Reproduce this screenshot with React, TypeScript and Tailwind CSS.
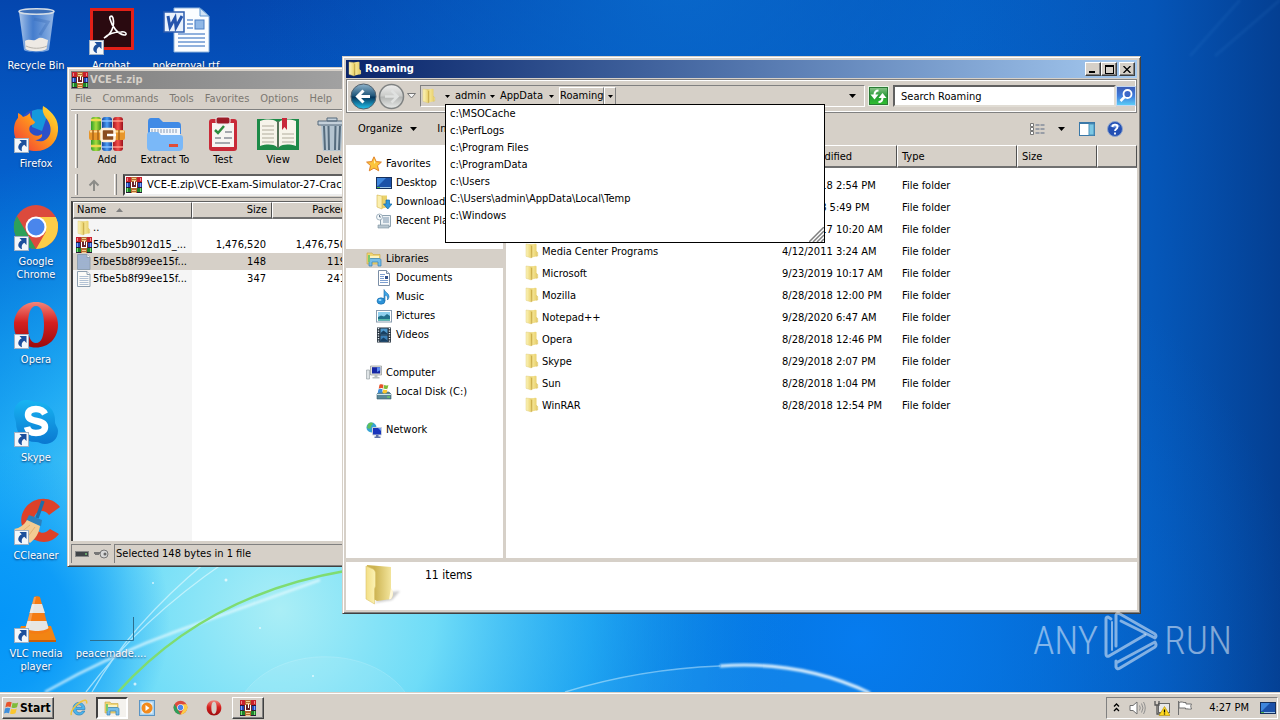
import React from "react";

type IconProps = { className?: string };

const raised =
  "border border-t-white border-l-white border-r-[#404040] border-b-[#404040] shadow-[inset_-1px_-1px_0_#808080] bg-[#d6d0c8]";
const windowFrame =
  "border border-t-[#d6d0c8] border-l-[#d6d0c8] border-r-[#404040] border-b-[#404040] shadow-[inset_1px_1px_0_#ffffff,inset_-1px_-1px_0_#808080] bg-[#d6d0c8] p-[3px]";
const headCell =
  "border-t border-l border-t-white border-l-white border-r border-b-2 border-r-[#505050] border-b-[#707070] bg-[#d6d0c8] font-normal whitespace-nowrap overflow-hidden p-0";

/* ---------- icons ---------- */

function RarIcon({ className }: IconProps) {
  return (
    <svg viewBox="0 0 36 36" className={className} aria-hidden="true">
      <defs>
        <linearGradient id="rg" x1="0" x2="1"><stop offset="0" stopColor="#2f9e2b" /><stop offset=".5" stopColor="#a6dc3c" /><stop offset="1" stopColor="#3a8f20" /></linearGradient>
        <linearGradient id="rb" x1="0" x2="1"><stop offset="0" stopColor="#1646a0" /><stop offset=".5" stopColor="#4aa0f5" /><stop offset="1" stopColor="#153d92" /></linearGradient>
        <linearGradient id="rr" x1="0" x2="1"><stop offset="0" stopColor="#a81622" /><stop offset=".5" stopColor="#f4504a" /><stop offset="1" stopColor="#9c101c" /></linearGradient>
      </defs>
      <rect x="2" y="1" width="10" height="34" rx="3" fill="url(#rg)" />
      <rect x="13" y="1" width="10" height="34" rx="3" fill="url(#rb)" />
      <rect x="24" y="1" width="10" height="34" rx="3" fill="url(#rr)" />
      <path d="M2 4h10M2 30h10" stroke="#f0d850" strokeWidth="2.500" />
      <path d="M13 5h10M13 31h10" stroke="#8cc4ff" strokeWidth="1.500" />
      <path d="M24 5h10M24 31h10" stroke="#ff9a8a" strokeWidth="1.500" />
      <rect x="0" y="14" width="36" height="10" rx="2" fill="#e8962a" />
      <path d="M1 15.500h34" stroke="#ffd890" strokeWidth="2" />
      <path d="M4 14v10M9 14v10M30 14v10" stroke="#a86418" strokeWidth="1.500" />
      <rect x="12.500" y="13" width="13" height="12" rx="2" fill="#8a4c20" stroke="#fff0d8" strokeWidth="2.500" />
      <path d="M18 19h9" stroke="#fff" strokeWidth="2.500" />
    </svg>
  );
}

function RarMini({ className = "size-4" }: IconProps) {
  return (
    <svg viewBox="0 0 16 16" className={className} shapeRendering="crispEdges" aria-hidden="true">
      <rect x="0" y="0" width="16" height="5" fill="#c8202c" />
      <rect x="0" y="5" width="16" height="5" fill="#2246b8" />
      <rect x="0" y="10" width="16" height="6" fill="#1e8428" />
      <path d="M0 5.500h16M0 10.500h16M0 15.500h16" stroke="#2a1838" />
      <path d="M1.500 1v3M14.500 1v3" stroke="#f08888" />
      <path d="M1.500 6v4M14.500 6v4" stroke="#80a8f8" />
      <path d="M1.500 11v4M14.500 11v4" stroke="#80d880" />
      <rect x="5" y="0" width="6" height="16" fill="#b86a30" />
      <path d="M6 1h4M6 3h4M6 13h4M6 15h4" stroke="#f0cc90" />
      <rect x="4" y="5" width="8" height="6" fill="#6a2428" />
      <path d="M5.500 5v5h5V5M8 4v4" fill="none" stroke="#fff" strokeWidth="1" />
    </svg>
  );
}

function FolderIcon({ className = "size-4" }: IconProps) {
  return (
    <svg viewBox="0 0 16 16" className={className} aria-hidden="true">
      <defs>
        <linearGradient id="fo" x1="0" x2="1"><stop offset="0" stopColor="#fcf4bc" /><stop offset="1" stopColor="#ead26c" /></linearGradient>
        <linearGradient id="fo2" x1="0" x2="1"><stop offset="0" stopColor="#d9bc4c" /><stop offset=".4" stopColor="#f3e290" /><stop offset="1" stopColor="#e6cb62" /></linearGradient>
      </defs>
      <path d="M6 1.500l5.500-.8 1 .5v7l1.200 1.300V13L8 14.500z" fill="url(#fo2)" />
      <path d="M12.500 8.500l1.200 1V13l-1.200.3z" fill="#fff3b4" stroke="#cdb04a" strokeWidth=".4" />
      <path d="M2 1l4 .5 1.300 1.500v12L2 13.300z" fill="url(#fo)" stroke="#dcc468" strokeWidth=".4" />
      <path d="M7.300 3v12l.8-.6V3z" fill="#c4a440" />
    </svg>
  );
}

function BigFolder({ className }: IconProps) {
  return (
    <svg viewBox="0 0 40 42" className={className} aria-hidden="true">
      <defs>
        <linearGradient id="bf" x1="0" x2="1"><stop offset="0" stopColor="#f3df86" /><stop offset="1" stopColor="#fbf2b4" /></linearGradient>
        <linearGradient id="bf2" x1="0" x2="1"><stop offset=".3" stopColor="#cdb452" /><stop offset="1" stopColor="#f7eaa4" /></linearGradient>
        <filter id="bfb"><feGaussianBlur stdDeviation="1.200" /></filter>
      </defs>
      <path d="M10 39l18-3 8-9-10 1z" fill="#999" opacity=".5" filter="url(#bfb)" />
      <path d="M3 1l24 2v22c3 3 2 8 0 10l-14 2-9-5z" fill="url(#bf2)" />
      <path d="M27 24c3 3 2 8 0 11l-2 .5z" fill="#fff8dc" />
      <path d="M2 2l7 3c2 1 2.500 3 2.500 5v12l-1 3v15L2 35z" fill="url(#bf)" stroke="#dcc46c" strokeWidth=".6" />
    </svg>
  );
}

function DocIcon({ className = "size-4", tint = "#fbfbf8" }: IconProps & { tint?: string }) {
  return (
    <svg viewBox="0 0 16 16" className={className} aria-hidden="true">
      <path d="M1.500.5h9.500l3 3v12H1.500z" fill={tint} stroke="#8fa0b0" />
      <path d="M11 .5v3h3" fill="#fff" stroke="#8fa0b0" />
      <path d="M3.500 5.500h9M3.500 7.500h9M3.500 9.500h9M3.500 11.500h9M3.500 13.500h9" stroke="#9fb4cc" strokeWidth=".8" />
    </svg>
  );
}

function Caret({ className = "w-[7px] h-1" }: IconProps) {
  return (
    <svg viewBox="0 0 7 4" className={className} aria-hidden="true">
      <path d="M0 0h7L3.500 4z" fill="currentColor" />
    </svg>
  );
}

const Svg16 = ({ children }: { children: React.ReactNode }) => (
  <svg viewBox="0 0 16 16" className="size-4 shrink-0" aria-hidden="true">{children}</svg>
);

const StarIcon = () => (
  <Svg16>
    <path d="M8 .8l2.200 4.800 5.200.5-3.900 3.500 1.200 5.200L8 12.100l-4.700 2.700 1.200-5.200L.6 6.100l5.200-.5z" fill="#fcc43c" stroke="#e0822a" />
    <path d="M8 3l1.500 3.500L8 8z" fill="#fff2b0" />
  </Svg16>
);
const DesktopIcon = () => (
  <Svg16>
    <rect x=".5" y="2.500" width="15" height="11" fill="#1c51a8" stroke="#16305c" />
    <path d="M1 3h9L2 11H1z" fill="#3f86dc" />
    <path d="M1 12.500h14" stroke="#9ec4e8" />
    <path d="M1 12.500h3" stroke="#53b84c" />
  </Svg16>
);
const DownloadsIcon = () => (
  <Svg16>
    <path d="M6 1.500h5v12l-5 1z" fill="#ead26c" />
    <path d="M1 1l5 1v13l-5-2z" fill="#fbefae" stroke="#d3b449" strokeWidth=".6" />
    <path d="M10 6h3.500v4H16l-4.200 5L7.500 10H10z" fill="#2d96dc" stroke="#12659f" strokeWidth=".7" />
  </Svg16>
);
const RecentIcon = () => (
  <Svg16>
    <path d="M4.500 2.500h10v11h-10z" fill="#eef3f6" stroke="#8ea2b0" />
    <path d="M2 12h11v3H2z" fill="#b8c6d0" stroke="#7b909e" strokeWidth=".6" />
    <path d="M7 5h6M7 7h6M7 9h6" stroke="#7a94ac" />
    <circle cx="3.500" cy="4" r="3" fill="#f6fafc" stroke="#90a4b2" strokeWidth=".8" />
    <path d="M3.500 2v2H5" fill="none" stroke="#4a6078" strokeWidth=".8" />
  </Svg16>
);
const LibrariesIcon = () => (
  <Svg16>
    <path d="M1 2h5l1 1.500h7V13H1z" fill="#f0d574" stroke="#c9a640" strokeWidth=".6" />
    <path d="M2 5h11v2H2z" fill="#fdf3c0" />
    <path d="M3 15V9.500C3 8 4 7.500 5 7.500h8c1.500 0 2 .8 2 2V15h-3v-4H6v4z" fill="#76bde8" stroke="#2f7fb8" strokeWidth=".7" />
    <path d="M2 4h2v7H2z" fill="#7cc96a" />
  </Svg16>
);
const DocumentsIcon = () => (
  <Svg16>
    <path d="M2.500.5h8l3 3v12h-11z" fill="#fff" stroke="#7b8ea6" />
    <path d="M10.500.5v3h3" fill="#dbe6f2" stroke="#7b8ea6" />
    <path d="M4 4.500h5M4 6.500h4M4 8.500h4M4 10.500h8M4 12.500h8" stroke="#7d9fd0" />
    <path d="M9 6h3v3H9z" fill="#30528c" />
  </Svg16>
);
const MusicIcon = () => (
  <Svg16>
    <ellipse cx="5" cy="12" rx="4" ry="3.200" fill="#2b92d8" stroke="#1668a8" strokeWidth=".6" />
    <path d="M8 12V.5c.5 2.500 5 3.500 5 7 0 1.500-.8 2.500-1.500 3.500.5-3-.5-4.500-2.500-5V12z" fill="#3fa6e6" stroke="#1668a8" strokeWidth=".6" />
    <ellipse cx="4" cy="11" rx="1.500" ry="1" fill="#9cdcff" />
  </Svg16>
);
const PicturesIcon = () => (
  <Svg16>
    <rect x=".5" y="2.500" width="15" height="11.500" fill="#fff" stroke="#8a9db0" />
    <path d="M2 4h12v8.500H2z" fill="#8fd0ee" />
    <path d="M2 9l3-1.500 3 1 3-2.500 3 2v4.500H2z" fill="#22708c" />
    <path d="M2 11h12v1.500H2z" fill="#56b8a8" />
  </Svg16>
);
const VideosIcon = () => (
  <Svg16>
    <rect x="1" y=".5" width="14" height="15" fill="#26323e" />
    <path d="M2.500 1v15M13.500 1v15" stroke="#e8f0f6" strokeWidth="1.400" strokeDasharray="1.300 1.200" />
    <path d="M4.500 1.500h7v6h-7z" fill="#4f9ad0" />
    <path d="M4.500 8.500h7v6h-7z" fill="#3a7fb8" />
    <path d="M4.500 6l3-2.500 4 3v1h-7zM4.500 13l3-2.500 4 3v1h-7z" fill="#173f63" />
  </Svg16>
);
const ComputerIcon = () => (
  <Svg16>
    <path d="M.5 5h3v9h-3z" fill="#dfe4e6" stroke="#8d979c" strokeWidth=".6" />
    <path d="M4.500 1h11v9h-11z" fill="#e6e6dc" stroke="#80868c" strokeWidth=".6" />
    <path d="M6 2.200h8.200v6.300H6z" fill="#1626a4" />
    <path d="M11 2.200h3.200v3L11 7z" fill="#5d8cf0" />
    <path d="M8.500 10h3v2h-3zM6.500 12h7v1.500h-7z" fill="#b9bfc0" />
  </Svg16>
);
const WindowsFlag = ({ className = "size-4" }: IconProps) => (
  <svg viewBox="0 0 16 16" className={className} aria-hidden="true">
    <path d="M2.500 2.500c2-1.200 3.600-1 5.200-.2L6.500 7.200c-1.600-.8-3.400-.9-5.200.2z" fill="#e8532a" />
    <path d="M8.600 2.700c1.800.8 3.600.8 5.600-.3L13 7.300c-2 1-3.600.9-5.500.2z" fill="#7fbb3a" />
    <path d="M1 8.500c1.900-1.100 3.600-1 5.200-.2L5 13.200c-1.600-.8-3.300-.8-5 .3z" fill="#3f8fdc" />
    <path d="M7.200 8.700c1.800.8 3.600.8 5.600-.3l-1.300 4.900c-1.900 1.100-3.700.9-5.500.2z" fill="#fbc62e" />
  </svg>
);
const DiskIcon = () => (
  <Svg16>
    <path d="M1 10l2-2h10l2 2v5H1z" fill="#5a8796" stroke="#365c6c" strokeWidth=".6" />
    <path d="M1 10.500h14" stroke="#cfe4ea" />
    <path d="M11 13h3" stroke="#6fe04a" />
    <path d="M3.500.8C5 0 6.200.2 7.500.8L6.800 4.500c-1.400-.6-2.700-.5-4.100.2z" fill="#e8532a" />
    <path d="M8.200 1.100c1.500.6 2.700.6 4.200-.2l-.8 3.600c-1.500.8-2.800.6-4.200.1z" fill="#7fbb3a" />
    <path d="M2.400 5.400c1.400-.8 2.800-.7 4.200-.1L5.900 9c-1.400-.6-2.900-.5-4.200.3z" fill="#3f8fdc" />
    <path d="M7.200 5.600c1.400.6 2.700.6 4.200-.1l-.8 3.600c-1.400.7-2.700.5-4.100 0z" fill="#fbc62e" />
  </Svg16>
);
const NetworkIcon = () => (
  <Svg16>
    <circle cx="5.500" cy="5.500" r="5" fill="#37a3d4" />
    <path d="M2 2c2-2 4-1.500 5-1 0 2-2 2-2 4s-2 2-4 1zM6 7l3-2 1.500 2L7 10z" fill="#5fc05c" />
    <path d="M6.500 5.500h9v7.500h-9z" fill="#1a35bc" stroke="#c9d1da" />
    <path d="M12 6l3 0v3z" fill="#6d9cf4" />
    <path d="M10 13h2.500v1.500h2V16h-6v-1.500H10z" fill="#5f73a8" />
  </Svg16>
);

function ChromeIcon({ className }: IconProps) {
  return (
    <svg viewBox="0 0 48 48" className={className} aria-hidden="true">
      <circle cx="24" cy="24" r="22" fill="#dc4a3d" />
      <path d="M4.900 13L14.500 29.500 24 46A22 22 0 0 1 4.900 13z" fill="#2ca05a" />
      <path d="M24 46l9.500-16.500L34 14h9.600A22 22 0 0 1 24 46z" fill="#fccd48" />
      <path d="M24 14h19.600A22 22 0 0 1 46 24l-12 4z" fill="#fccd48" />
      <circle cx="24" cy="24" r="10.500" fill="#fff" />
      <circle cx="24" cy="24" r="8.500" fill="#4a86ec" />
    </svg>
  );
}
function OperaIcon({ className }: IconProps) {
  return (
    <svg viewBox="0 0 48 48" className={className} aria-hidden="true">
      <defs>
        <linearGradient id="op" x1="0" y1="0" x2="0" y2="1"><stop offset="0" stopColor="#f2857a" /><stop offset=".45" stopColor="#d5201f" /><stop offset="1" stopColor="#9c0b0d" /></linearGradient>
      </defs>
      <path fillRule="evenodd" d="M24 1C11 1 2 11 2 24s9 22.500 22 22.500S46 37 46 24 37 1 24 1zm0 4c5.500 0 8 8 8 19s-2.500 18-8 18-8-7-8-18 2.500-19 8-19z" fill="url(#op)" />
    </svg>
  );
}

function RecycleIcon() {
  return (
    <svg viewBox="0 0 48 48" className="size-12" aria-hidden="true">
      <defs>
        <linearGradient id="rc" x1="0" x2="1"><stop offset="0" stopColor="#c8dcf4" stopOpacity=".85" /><stop offset=".4" stopColor="#6f9ede" stopOpacity=".6" /><stop offset="1" stopColor="#b8d2f2" stopOpacity=".8" /></linearGradient>
      </defs>
      <path d="M7 5l5 38c3 3 21 3 25 0l5-38z" fill="url(#rc)" />
      <path d="M13 34c5-3 8 1 12-2s8 0 11 1l-1.500 9c-4 3-17 3-21 0z" fill="#eeeae4" />
      <path d="M14 39c6 3 15 3 21 0" stroke="#b8b4ac" fill="none" />
      <path d="M22 12l14 3-8 13" fill="none" stroke="#3566b4" strokeWidth="3" opacity=".35" />
      <ellipse cx="24.500" cy="4.500" rx="17.500" ry="2.800" fill="#3d6fb8" stroke="#d3dce6" strokeWidth="1.600" />
    </svg>
  );
}
function AcrobatIcon() {
  return (
    <svg viewBox="0 0 48 48" className="size-12" aria-hidden="true">
      <rect x="3" y="1" width="44" height="42" fill="#e22018" />
      <rect x="6" y="4" width="38" height="36" fill="#2a0a10" />
      <path d="M17 31c7-3 11-12 9-20-1-3-4-2-3 1 2 8 8 15 14 16 4 0 2-4-3-3-7 0-13 2-17 6z" fill="none" stroke="#fff" strokeWidth="1.600" />
    </svg>
  );
}
function WordIcon() {
  return (
    <svg viewBox="0 0 48 48" className="size-12" aria-hidden="true">
      <path d="M12 1h26l9 8v36H12z" fill="#fbfdff" stroke="#8fb4dc" />
      <path d="M38 1v8h9z" fill="#cfe2f5" stroke="#5b94d0" />
      <path d="M16 27h27M16 31h27M16 35h27M16 39h27M25 13h6M25 17h6M25 21h6" stroke="#6c96d2" strokeWidth="1.300" />
      <rect x="33" y="13" width="9" height="9" fill="#8fb7e6" stroke="#4a7fc4" />
      <rect x="2" y="5" width="20" height="20" fill="#eaf2fc" stroke="#2c5cae" strokeWidth="1.500" />
      <path d="M6 9l2 11 5-9 1 9 6-11" fill="none" stroke="#2454ac" strokeWidth="3" />
    </svg>
  );
}
function FirefoxIcon() {
  return (
    <svg viewBox="0 0 48 48" className="size-12" aria-hidden="true">
      <defs>
        <linearGradient id="ff" x1="1" y1="0" x2="0" y2="1"><stop offset="0" stopColor="#ffe838" /><stop offset=".45" stopColor="#ff9a1c" /><stop offset="1" stopColor="#f0303c" /></linearGradient>
      </defs>
      <circle cx="24" cy="22" r="17" fill="#2c50c8" />
      <path d="M20 6c6-3 13-2 16 2l-6 18-10-4z" fill="#1599dc" />
      <path d="M31 1c10 6 16 14 15 25-1 12-10 20-22 20S2 38 2 25c0-6 2-10 4-12V8c2 1 4 2 5 4 3-1 5-2 7-4 0 3 1 5 3 7l2 2c0 2-4 3-5 4-1 2-1 4 0 6 3 4 8 5 12 2 1 4-4 6-7 6 6 3 12 1 15-6 2-7-1-12-4-16-3-4-4-8-3-12z" fill="url(#ff)" />
    </svg>
  );
}
function SkypeIcon() {
  return (
    <svg viewBox="0 0 48 48" className="size-12" aria-hidden="true">
      <defs>
        <linearGradient id="sk" x1="0" y1="0" x2="0" y2="1"><stop offset="0" stopColor="#18b4f2" /><stop offset="1" stopColor="#0a78d0" /></linearGradient>
      </defs>
      <path d="M14 1c5 0 7 2 10 2 12 0 20 9 19 20 0 3 3 5 3 9 0 8-6 13-13 13-4 0-6-2-9-2C12 43 4 35 4 24c0-3-2-5-2-10C2 7 7 1 14 1z" fill="url(#sk)" />
      <path d="M33 15c-2-4-5-5-9-5-5 0-8 2-8 6 0 8 17 4 17 12 0 4-4 6-9 6s-8-2-9-6" fill="none" stroke="#fff" strokeWidth="6.500" />
    </svg>
  );
}
function CCleanerIcon() {
  return (
    <svg viewBox="0 0 48 48" className="size-12" aria-hidden="true">
      <path d="M48 10L37 18c-3-4-7-5-11-3-6 4-6 14 0 19 4 3 8 2 12-2l9 5c-6 8-15 10-24 6C9 37 5 21 14 10 23-1 40-1 48 10z" fill="#dd4128" />
      <path d="M31 4l-6 17" stroke="#1f6ea8" strokeWidth="3.500" />
      <path d="M17 18l13 5-1 6-15-5z" fill="#2c80bc" />
      <path d="M15 23l13 6c-1 8-5 13-10 17L2 32c6-1 10-4 13-9z" fill="#f2cb92" />
      <path d="M18 28L8 36M23 30l-9 12" stroke="#e2b274" />
    </svg>
  );
}
function VlcIcon() {
  return (
    <svg viewBox="0 0 48 48" className="size-12" aria-hidden="true">
      <path d="M9 31h30l5 14-1 2H4l-1-2z" fill="#f28413" />
      <path d="M3 45h41v2H3z" fill="#c85e08" />
      <path d="M22 2c1-1 5-1 6 0l9 33c-3 5-21 5-24 0z" fill="#f47c14" />
      <path d="M20 9h10l3 9H17.500zM15.500 26h19l2 7c-4 4-19 4-23 0z" fill="#e6e6e4" />
      <path d="M22 2h2l-7 33-4 0z" fill="#fff" opacity=".25" />
    </svg>
  );
}
function GhostIcon() {
  return (
    <svg viewBox="0 0 48 48" className="size-12" aria-hidden="true">
      <path d="M3 45.500h43.500V22" fill="none" stroke="#2c6e8e" />
    </svg>
  );
}
function ShortcutBadge() {
  return (
    <svg viewBox="0 0 15 15" className="absolute bottom-0 left-0.5 size-[15px]" aria-hidden="true">
      <rect x=".5" y=".5" width="14" height="14" fill="#f4f7fa" stroke="#9fb0c4" />
      <path d="M5.500 2h7v7L10.300 6.800C8 8 7.200 10 8 13.200 3.200 11.500 3 7 7.700 4.200z" fill="#1c4f9c" />
    </svg>
  );
}

/* ---------- desktop ---------- */

function Wallpaper() {
  return (
    <svg viewBox="0 0 1280 692" preserveAspectRatio="none" className="absolute inset-0 size-full" aria-hidden="true">
      <defs>
        <linearGradient id="w1" x1="0" y1="0" x2="0" y2="1"><stop offset="0" stopColor="#0446ae" /><stop offset=".25" stopColor="#0560cc" /><stop offset=".5" stopColor="#0586e4" /><stop offset=".75" stopColor="#0499f4" /><stop offset="1" stopColor="#0596f8" /></linearGradient>
        <linearGradient id="w2" x1="0" y1="0" x2="1" y2="0"><stop offset=".2" stopColor="#0355bc" stopOpacity="0" /><stop offset=".75" stopColor="#0566cc" stopOpacity=".75" /><stop offset=".9" stopColor="#0556b8" stopOpacity=".95" /><stop offset="1" stopColor="#043f92" /></linearGradient>
        <radialGradient id="w3" gradientUnits="userSpaceOnUse" cx="280" cy="610" r="520"><stop offset="0" stopColor="#aaeef6" /><stop offset=".3" stopColor="#74e0f8" stopOpacity=".95" /><stop offset=".6" stopColor="#2cb8f8" stopOpacity=".7" /><stop offset="1" stopColor="#0580e8" stopOpacity="0" /></radialGradient>
        <radialGradient id="w4" gradientUnits="userSpaceOnUse" cx="860" cy="640" r="440"><stop offset="0" stopColor="#067cf0" stopOpacity=".95" /><stop offset="1" stopColor="#0566d0" stopOpacity="0" /></radialGradient>
        <radialGradient id="w5" gradientUnits="userSpaceOnUse" cx="680" cy="-40" r="460"><stop offset="0" stopColor="#0a6ed0" stopOpacity=".8" /><stop offset="1" stopColor="#0560c4" stopOpacity="0" /></radialGradient>
        <radialGradient id="w6" gradientUnits="userSpaceOnUse" cx="0" cy="620" r="170"><stop offset="0" stopColor="#0596f8" /><stop offset=".4" stopColor="#0596f8" stopOpacity=".85" /><stop offset="1" stopColor="#0596f8" stopOpacity="0" /></radialGradient>
        <filter id="wb"><feGaussianBlur stdDeviation="1.200" /></filter>
      </defs>
      <rect width="1280" height="692" fill="url(#w1)" />
      <rect width="1280" height="692" fill="url(#w2)" />
      <rect width="1280" height="692" fill="url(#w5)" />
      <rect width="1280" height="692" fill="url(#w4)" />
      <rect width="1280" height="692" fill="url(#w3)" />
      <rect width="1280" height="692" fill="url(#w6)" />
      <path d="M245 692C280 645 370 645 405 692z" fill="#fff" opacity=".08" />
      <path d="M245 692C280 645 370 645 405 692" fill="none" stroke="#fff" opacity=".15" />
      <path d="M45 692Q110 655 180 630T320 580" fill="none" stroke="#e8fbff" strokeWidth="2.500" opacity=".75" filter="url(#wb)" />
      <path d="M86 692Q140 620 225 562M92 692Q130 625 206 562" fill="none" stroke="#e8fbff" strokeWidth="1.300" opacity=".6" />
      <path d="M118 692Q205 595 345 571" fill="none" stroke="#7fdc70" strokeWidth="2.500" />
      <path d="M565 692Q640 669 720 666" fill="none" stroke="#d8f4ff" strokeWidth="1.500" opacity=".5" />
      <path d="M565 693Q640 669 720 666Q800 660 870 693Z" fill="#3cb0f8" opacity=".2" />
      <path d="M720 666Q800 660 870 693" fill="none" stroke="#f0fbff" strokeWidth="3" opacity=".9" filter="url(#wb)" />
      <path d="M1280 0L1215 56M1240 0L1190 56" stroke="#4b96e0" strokeWidth="3" opacity=".1" filter="url(#wb)" />
      <g fill="#fff" opacity=".7"><circle cx="226" cy="580" r="1.500" /><circle cx="153" cy="583" r="1" /><circle cx="135" cy="684" r="1.500" /><circle cx="260" cy="628" r="1" /><circle cx="313" cy="676" r="1" /></g>
    </svg>
  );
}

type Shortcut = { label: string; icon: React.ReactNode; badge?: boolean; place: string };
const shortcuts: Shortcut[] = [
  { label: "Recycle Bin", icon: <RecycleIcon />, place: "col-start-1 row-start-1" },
  { label: "Firefox", icon: <FirefoxIcon />, badge: true, place: "col-start-1 row-start-2" },
  { label: "Google Chrome", icon: <ChromeIcon className="size-12" />, badge: true, place: "col-start-1 row-start-3" },
  { label: "Opera", icon: <OperaIcon className="size-12" />, badge: true, place: "col-start-1 row-start-4" },
  { label: "Skype", icon: <SkypeIcon />, badge: true, place: "col-start-1 row-start-5" },
  { label: "CCleaner", icon: <CCleanerIcon />, badge: true, place: "col-start-1 row-start-6" },
  { label: "VLC media player", icon: <VlcIcon />, badge: true, place: "col-start-1 row-start-7" },
  { label: "Acrobat", icon: <AcrobatIcon />, badge: true, place: "col-start-2 row-start-1" },
  { label: "peacemade....", icon: <GhostIcon />, place: "col-start-2 row-start-7" },
  { label: "pokerroyal.rtf", icon: <WordIcon />, place: "col-start-3 row-start-1" },
];

function DesktopIcons() {
  return (
    <div className="relative grid w-fit auto-rows-[98px] grid-cols-[72px_72px_72px] gap-x-[3px] pt-[7px]">
      {shortcuts.map((s) => (
        <button key={s.label} className={`flex flex-col items-center gap-1 text-white ${s.place}`}>
          <span className="relative">
            {s.icon}
            {s.badge && <ShortcutBadge />}
          </span>
          <span className="leading-[13px] [text-shadow:0_1px_2px_#0a2a60]">{s.label}</span>
        </button>
      ))}
    </div>
  );
}

/* ---------- archive window ---------- */

const ExtractIcon = () => (
  <svg viewBox="0 0 36 36" className="h-9 w-[38px]" aria-hidden="true">
    <path d="M1 6c0-3 1-4 3-4h8l4 4h14c3 0 4 1 4 4v8H1z" fill="#3f8ae6" />
    <path d="M3 12h30v8H3z" fill="#f2f7fd" />
    <path d="M5 13v4M8 13v4M11 13v4M14 13v4M17 13v4M20 13v4M23 13v4M26 13v4M29 13v4" stroke="#8a9cb4" />
    <path d="M0 19c0-2 1-3 3-3h8l3 3h19c2 0 3 1 3 3v9c0 3-2 4-4 4H4c-3 0-4-2-4-4z" fill="#7ab8f8" />
    <path d="M22 28h9v3h-9z" fill="#e04c38" />
  </svg>
);
const TestIcon = () => (
  <svg viewBox="0 0 30 36" className="h-9 w-[30px]" aria-hidden="true">
    <rect x="1" y="3" width="28" height="32" rx="3" fill="#c92a38" />
    <rect x="4" y="7" width="22" height="24" fill="#f7f5f2" />
    <rect x="8" y="1" width="14" height="7" rx="2" fill="#9c1c28" stroke="#eee" />
    <path d="M7 14l3 3 6-7" fill="none" stroke="#2e8c3e" strokeWidth="2.500" />
    <path d="M17 16h7M7 22h6M16 22h8M7 27h15" stroke="#8a8f98" strokeWidth="1.500" />
  </svg>
);
const ViewIcon = () => (
  <svg viewBox="0 0 42 36" className="h-9 w-[42px]" aria-hidden="true">
    <path d="M0 3h42v31H0z" fill="#1d8a48" />
    <path d="M3 5c7-2 13-2 17 1v25c-4-3-10-3-17-1zM39 5c-7-2-13-2-17 1v25c4-3 10-3 17-1z" fill="#f6f4ea" />
    <path d="M21 5v27" stroke="#6b6b60" strokeWidth="1.500" />
    <path d="M5 10h12M5 14h12M5 18h12M5 22h12M5 26h12M25 18h12M25 22h12M25 26h12" stroke="#b0ac9c" />
    <path d="M25 2h5v12l-2.500-3-2.500 3z" fill="#c8283a" />
  </svg>
);
const DeleteIcon = () => (
  <svg viewBox="0 0 30 36" className="h-9 w-[30px]" aria-hidden="true">
    <path d="M4 9h22l-2 26H6z" fill="#b4c4d0" />
    <path d="M7 10l1 24M11.500 10l.5 24M18.500 10l-.5 24M23 10l-1 24" stroke="#566c7e" strokeWidth="2" />
    <path d="M1 5h28v4H1zM10 2h10v3H10z" fill="#c4d0da" stroke="#54687a" />
  </svg>
);

const archiveTools = [
  { label: "Add", icon: <RarIcon className="h-9 w-[38px]" />, w: "w-[58px]" },
  { label: "Extract To", icon: <ExtractIcon />, w: "w-[58px]" },
  { label: "Test", icon: <TestIcon />, w: "w-[58px]" },
  { label: "View", icon: <ViewIcon />, w: "w-[52px]" },
  { label: "Delete", icon: <DeleteIcon />, w: "w-[56px]" },
];

const archiveRows = [
  { name: "..", size: "", packed: "", icon: <FolderIcon /> },
  { name: "5fbe5b9012d15_...", size: "1,476,520", packed: "1,476,750", icon: <RarMini /> },
  { name: "5fbe5b8f99ee15f...", size: "148", packed: "119", icon: <DocIcon tint="#9fb2d0" />, selected: true },
  { name: "5fbe5b8f99ee15f...", size: "347", packed: "241", icon: <DocIcon /> },
];

function Grip() {
  return <span className="w-[3px] shrink-0 self-stretch border-r border-l border-l-white border-r-[#808080]" />;
}

function ArchiveWindow() {
  return (
    <section aria-label="VCE-E.zip" className={`absolute top-[67px] left-[67px] flex h-[500px] w-[520px] flex-col ${windowFrame}`}>
      <header className="flex h-[18px] shrink-0 items-center gap-0.5 bg-linear-to-r from-[#808080] to-[#c0c0c0] pl-px font-bold text-[#d6d0c8]">
        <RarMini />
        <h2>VCE-E.zip</h2>
      </header>
      <nav className="flex h-5 shrink-0 items-center gap-[11px] px-1 text-[#7c7872]">
        {["File", "Commands", "Tools", "Favorites", "Options", "Help"].map((m) => (
          <button key={m}>{m}</button>
        ))}
      </nav>
      <div className="flex h-[63px] shrink-0 border-t border-t-[#808080] py-1 pl-1 shadow-[inset_0_1px_0_#fff]">
        <Grip />
        {archiveTools.map((t) => (
          <button key={t.label} className={`flex shrink-0 flex-col items-center justify-between pt-0.5 whitespace-nowrap ${t.w}`}>
            {t.icon}
            <span className="leading-[16px]">{t.label}</span>
          </button>
        ))}
      </div>
      <div className="flex h-[26px] shrink-0 items-center border-b border-[#808080] py-0.5 pl-1">
        <Grip />
        <button aria-label="Up one level" className="flex w-8 justify-center text-[#8c8c88]">
          <svg viewBox="0 0 12 12" className="size-3" fill="none" stroke="currentColor" strokeWidth="2"><path d="M6 12V2M1.500 6.500L6 2l4.500 4.500" /></svg>
        </button>
        <span className="w-1" />
        <Grip />
        <div className="ml-1.5 flex h-[22px] flex-1 items-center gap-[5px] border-2 border-t-[#606060] border-r-[#eee] border-b-[#eee] border-l-[#404040] bg-white pl-px">
          <RarMini />
          <input aria-label="Archive path" readOnly defaultValue="VCE-E.zip\VCE-Exam-Simulator-27-Crack-Full" className="min-w-0 flex-1 bg-transparent outline-none" />
        </div>
      </div>
      <div className="mt-[3px] min-h-0 flex-1 overflow-hidden border-t border-l-2 border-t-[#606060] border-l-[#404040] bg-[linear-gradient(to_right,#f5f5f5_119px,#ffffff_119px)]">
        <table className="w-full table-fixed border-separate border-spacing-0">
          <colgroup>
            <col className="w-[119px]" />
            <col className="w-20" />
            <col className="w-20" />
            <col />
          </colgroup>
          <thead>
            <tr className="h-[17px]">
              <th className={`${headCell} text-left`}>
                <span className="flex items-center gap-2.5 pl-[3px]">Name <Caret className="h-1 w-[7px] rotate-180 text-[#808080]" /></span>
              </th>
              <th className={`${headCell} text-right`}><span className="pr-1">Size</span></th>
              <th className={`${headCell} text-right`}><span className="pr-1">Packed</span></th>
              <th className={`${headCell} text-left`}><span className="pl-1.5">Type</span></th>
            </tr>
          </thead>
          <tbody>
            {archiveRows.map((r, i) => (
              <tr key={i} className={`h-[17px] ${r.selected ? "bg-[#d6d0c8]" : ""}`}>
                <td className="overflow-hidden p-0">
                  <span className="flex h-[17px] items-center pl-[3px] whitespace-nowrap">{r.icon}<span className="pl-px">{r.name}</span></span>
                </td>
                <td className="p-0 pr-1.5 text-right">{r.size}</td>
                <td className="p-0 pr-1.5 text-right">{r.packed}</td>
                <td />
              </tr>
            ))}
          </tbody>
        </table>
      </div>
      <footer className="mt-[3px] flex h-[19px] shrink-0 gap-[3px] whitespace-nowrap">
        <span className="flex w-10 items-center justify-center gap-1 border-t border-l border-[#808080]">
          <svg viewBox="0 0 14 6" className="h-1.5 w-3.5"><rect x=".5" y=".5" width="13" height="5" fill="#404448" stroke="#888" /><path d="M10 3h2" stroke="#8f8" /></svg>
          <svg viewBox="0 0 16 10" className="h-2.5 w-4"><path d="M1 4h9M3 4v2M5 4v2" stroke="#777" strokeWidth="2" /><circle cx="11" cy="5" r="4" fill="#d8d8d8" stroke="#777" /><circle cx="12" cy="5" r="1.500" fill="#666" /></svg>
        </span>
        <span className="flex flex-1 items-center border-t border-l border-[#808080] pl-px">Selected 148 bytes in 1 file</span>
      </footer>
    </section>
  );
}

/* ---------- file explorer ---------- */

type NavItem = { label: string; icon: React.ReactNode; root?: boolean; current?: boolean };
const navGroups: NavItem[][] = [
  [
    { label: "Favorites", icon: <StarIcon />, root: true },
    { label: "Desktop", icon: <DesktopIcon /> },
    { label: "Downloads", icon: <DownloadsIcon /> },
    { label: "Recent Places", icon: <RecentIcon /> },
  ],
  [
    { label: "Libraries", icon: <LibrariesIcon />, root: true, current: true },
    { label: "Documents", icon: <DocumentsIcon /> },
    { label: "Music", icon: <MusicIcon /> },
    { label: "Pictures", icon: <PicturesIcon /> },
    { label: "Videos", icon: <VideosIcon /> },
  ],
  [
    { label: "Computer", icon: <ComputerIcon />, root: true },
    { label: "Local Disk (C:)", icon: <DiskIcon /> },
  ],
  [{ label: "Network", icon: <NetworkIcon />, root: true }],
];

const files = [
  ["Adobe", "8/28/2018 2:54 PM"],
  ["FileZilla", "9/5/2018 5:49 PM"],
  ["Identities", "8/17/2017 10:20 AM"],
  ["Media Center Programs", "4/12/2011 3:24 AM"],
  ["Microsoft", "9/23/2019 10:17 AM"],
  ["Mozilla", "8/28/2018 12:00 PM"],
  ["Notepad++", "9/28/2020 6:47 AM"],
  ["Opera", "8/28/2018 12:46 PM"],
  ["Skype", "8/29/2018 2:07 PM"],
  ["Sun", "8/28/2018 1:04 PM"],
  ["WinRAR", "8/28/2018 12:54 PM"],
];

const suggestions = [
  "c:\\MSOCache",
  "c:\\PerfLogs",
  "c:\\Program Files",
  "c:\\ProgramData",
  "c:\\Users",
  "C:\\Users\\admin\\AppData\\Local\\Temp",
  "c:\\Windows",
];

function CrumbArrow() {
  return <span className="flex w-4 justify-center"><Caret className="h-[3px] w-[5px]" /></span>;
}

function ExplorerWindow() {
  return (
    <section aria-label="Roaming" className={`absolute top-14 left-[342px] flex h-[558px] w-[799px] flex-col ${windowFrame}`}>
      <header className="flex h-[18px] shrink-0 items-center gap-0.5 bg-linear-to-r from-[#0a246a] to-[#a6caf0] pr-0.5 pl-px font-bold text-white">
        <FolderIcon />
        <h1 className="flex-1">Roaming</h1>
        <button aria-label="Minimize" className={`flex h-3.5 w-4 items-end p-0.5 pl-[3px] text-black ${raised}`}>
          <span className="h-0.5 w-1.5 bg-black" />
        </button>
        <button aria-label="Maximize" className={`-ml-0.5 flex h-3.5 w-4 items-center justify-center ${raised}`}>
          <span className="h-[9px] w-[9px] border border-t-2 border-black" />
        </button>
        <button aria-label="Close" className={`flex h-3.5 w-4 items-center justify-center text-black ${raised}`}>
          <svg viewBox="0 0 8 7" className="h-[7px] w-2" stroke="currentColor" strokeWidth="1.300"><path d="M.5 0l7 7M7.500 0l-7 7" /></svg>
        </button>
      </header>

      <div className="mt-px flex h-[34px] shrink-0 items-center border border-[#808080] pl-[3px] shadow-[inset_1px_1px_0_#fff,inset_-1px_-1px_0_#fff]">
        <button aria-label="Back" className="mr-px">
          <svg viewBox="0 0 27 27" className="size-[27px]">
            <defs>
              <linearGradient id="bk" x1="0" y1="0" x2="0" y2="1"><stop offset="0" stopColor="#8fb4cc" /><stop offset=".48" stopColor="#1e5478" /><stop offset=".52" stopColor="#06345a" /><stop offset="1" stopColor="#22c4ee" /></linearGradient>
            </defs>
            <circle cx="13.500" cy="13.500" r="12.500" fill="url(#bk)" stroke="#52606c" />
            <path d="M20 13.500H8M13.500 7.500l-6 6 6 6" fill="none" stroke="#fff" strokeWidth="3" />
          </svg>
        </button>
        <button aria-label="Forward">
          <svg viewBox="0 0 27 27" className="size-[27px]">
            <defs>
              <linearGradient id="fw" x1="0" y1="0" x2="0" y2="1"><stop offset="0" stopColor="#efefee" /><stop offset=".48" stopColor="#c9cac8" /><stop offset=".52" stopColor="#b2b4b2" /><stop offset="1" stopColor="#e9ebea" /></linearGradient>
            </defs>
            <circle cx="13.500" cy="13.500" r="12" fill="url(#fw)" stroke="#7f8282" strokeWidth="1.500" />
            <path d="M7 13.500h12M13.500 7.500l6 6-6 6" fill="none" stroke="#dfe1e0" strokeWidth="2.500" />
          </svg>
        </button>
        <button aria-label="Recent pages" className="mr-1 ml-0.5">
          <svg viewBox="0 0 9 6" className="h-1.5 w-[9px]"><path d="M.5.5h8L4.500 5z" fill="#f4f4f4" stroke="#777" /></svg>
        </button>
        <div className="flex h-[22px] flex-1 items-center border border-t-[#808080] border-r-white border-b-white border-l-[#808080] leading-[16px]">
          <FolderIcon className="mr-0.5 size-4" />
          <CrumbArrow />
          <a href="#admin" className="w-[29px]">admin</a>
          <CrumbArrow />
          <a href="#appdata" className="w-[43px]">AppData</a>
          <CrumbArrow />
          <a href="#roaming" className="border border-t-white border-r-[#808080] border-b-[#808080] border-l-white">Roaming</a>
          <button aria-label="Subfolders" className="flex h-[18px] w-3 items-center justify-center border border-t-white border-r-[#808080] border-b-[#808080] border-l-white">
            <Caret className="h-[3px] w-[5px]" />
          </button>
          <button aria-label="Previous locations" className="mr-2 ml-auto"><Caret /></button>
        </div>
        <button aria-label="Refresh" className="ml-[3px] border border-[#e8f4e4]">
          <svg viewBox="0 0 19 18" className="h-[18px] w-[19px]">
            <defs><linearGradient id="rf" x1="0" y1="0" x2="0" y2="1"><stop offset="0" stopColor="#8ac48a" /><stop offset=".5" stopColor="#249a34" /><stop offset="1" stopColor="#2fc02f" /></linearGradient></defs>
            <rect x=".5" y=".5" width="18" height="17" fill="url(#rf)" stroke="#2a7a34" />
            <path d="M9.500 3.500C6.500 3.500 5.500 5 5.500 8" fill="none" stroke="#fff" strokeWidth="2" />
            <path d="M1.500 7.500h8l-4 5z" fill="#fff" />
            <path d="M9.500 15c3 0 4-1.500 4-4.500" fill="none" stroke="#fff" strokeWidth="2" />
            <path d="M9.500 11h8l-4-5z" fill="#fff" />
          </svg>
        </button>
        <input
          type="search"
          aria-label="Search Roaming"
          placeholder="Search Roaming"
          className="ml-1 h-[22px] w-[223px] border-2 border-t-[#606060] border-r-[#e0dcd4] border-b-[#e0dcd4] border-l-[#606060] bg-white pl-1.5 placeholder:text-black"
        />
        <button aria-label="Search">
          <svg viewBox="0 0 20 20" className="size-5">
            <defs><linearGradient id="se" x1="0" y1="0" x2="0" y2="1"><stop offset="0" stopColor="#3c5cb4" /><stop offset=".5" stopColor="#3f7cdc" /><stop offset="1" stopColor="#5cd0f8" /></linearGradient></defs>
            <rect x=".5" y=".5" width="19" height="19" fill="url(#se)" stroke="#c2d8f4" />
            <circle cx="11.500" cy="8" r="4" fill="#3c68c8" stroke="#fff" strokeWidth="1.800" />
            <path d="M8.500 11L4.500 15" stroke="#fff" strokeWidth="2.500" />
          </svg>
        </button>
      </div>

      <div className="flex h-8 shrink-0 items-center pr-3.5 pl-3">
        <button className="flex items-center gap-2">Organize <Caret /></button>
        <button className="ml-5">Include in library</button>
        <button aria-label="Change view" className="mr-6 ml-auto flex items-center gap-[13px]">
          <svg viewBox="0 0 15 13" className="h-[13px] w-[15px]"><path d="M.5.5h3v3h-3zM.5 4.500h3v3h-3zM.5 8.500h3v3h-3z" fill="#fff" stroke="#777" /><path d="M5.500 2h4M10.500 2h4M5.500 6h4M10.500 6h4M5.500 10h4M10.500 10h4" stroke="#5a6a84" /></svg>
          <Caret />
        </button>
        <button aria-label="Preview pane" className="-ml-2.5 mr-3">
          <svg viewBox="0 0 16 14" className="h-3.5 w-4"><rect x=".5" y=".5" width="15" height="13" fill="#fff" stroke="#3a78a8" /><path d="M0 1h16" stroke="#3a78a8" strokeWidth="2" /><path d="M10 2h5v11h-5z" fill="#7cc8e4" stroke="#4a90b8" /></svg>
        </button>
        <button aria-label="Help">
          <svg viewBox="0 0 16 16" className="size-4">
            <circle cx="8" cy="8" r="7.500" fill="#2450b4" stroke="#8ca4cc" />
            <path d="M3 5a6 5 0 0 1 10 0c-2 2-8 2-10 0z" fill="#7aa0e6" />
            <path d="M5.500 6c0-3.200 5-3.200 5 0C10.500 8 8 8 8 10M8 11.500v2" fill="none" stroke="#fff" strokeWidth="1.800" />
          </svg>
        </button>
      </div>

      <div className="flex min-h-0 flex-1">
        <nav className="flex w-[157px] shrink-0 flex-col gap-[19px] bg-white pt-[9px]">
          {navGroups.map((group) => (
            <ul key={group[0].label}>
              {group.map((item) => (
                <li key={item.label}>
                  <a
                    href="#nav"
                    className={`flex h-[19px] items-center gap-1 whitespace-nowrap ${item.root ? "pl-5" : "pl-[30px]"} ${item.current ? "bg-[#d6d0c8]" : ""}`}
                  >
                    {item.icon}
                    <span className="pt-px">{item.label}</span>
                  </a>
                </li>
              ))}
            </ul>
          ))}
        </nav>
        <div className="w-[3px] shrink-0 bg-[#d6d0c8]" />
        <div className="min-w-0 flex-1 bg-white">
          <table className="w-full table-fixed border-separate border-spacing-0">
            <colgroup>
              <col className="w-[271px]" />
              <col className="w-[120px]" />
              <col className="w-[120px]" />
              <col className="w-20" />
              <col />
            </colgroup>
            <thead>
              <tr className="h-[23px]">
                {["Name", "Date modified", "Type", "Size", ""].map((h) => (
                  <th key={h} className={`${headCell} pt-0.5 text-left`}><span className="pl-1">{h}</span></th>
                ))}
              </tr>
            </thead>
            <tbody className="before:block before:h-1.5">
              {files.map(([name, date]) => (
                <tr key={name} className="h-[22px]">
                  <td className="p-0"><span className="flex items-center gap-0.5 pl-[18px]"><FolderIcon /><span className="pt-px">{name}</span></span></td>
                  <td className="p-0 pt-px pl-[5px] whitespace-nowrap">{date}</td>
                  <td className="p-0 pt-px pl-[5px]">File folder</td>
                  <td />
                  <td />
                </tr>
              ))}
            </tbody>
          </table>
        </div>
      </div>

      <div className="h-1 shrink-0 bg-[#d6d0c8]" />
      <footer className="flex h-12 shrink-0 items-start gap-[22px] bg-white pt-0.5 pl-[18px]">
        <BigFolder className="h-[42px] w-[40px]" />
        <p className="-ml-px pt-[3px] text-[12px] leading-[16px]">11 items</p>
      </footer>

      <ul className="absolute top-[47px] left-[102px] h-[139px] w-[380px] border border-black bg-white pl-1">
        {suggestions.map((s) => (
          <li key={s} className="h-[17px] leading-[17px]">{s}</li>
        ))}
        <li aria-hidden="true" className="absolute right-0 bottom-0">
          <svg viewBox="0 0 15 15" className="size-[15px]" stroke="#808080" strokeWidth="1.500"><path d="M0 15L15 0M4 15L15 4M8 15l7-7M12 15l3-3" /></svg>
        </li>
      </ul>
    </section>
  );
}

/* ---------- taskbar ---------- */

function Taskbar() {
  return (
    <footer className="relative flex h-7 shrink-0 items-center border-t border-[#d6d0c8] bg-[#d6d0c8] pr-0.5 pl-0.5 shadow-[inset_0_1px_0_#fff]">
      <button className={`mt-0.5 flex h-[22px] w-[52px] items-center pl-px font-bold ${raised}`}>
        <WindowsFlag className="size-4" />
        <span className="text-[12px]">Start</span>
      </button>
      <div className="mt-0.5 ml-4 flex items-center">
        <button aria-label="Internet Explorer" className="mr-2">
          <svg viewBox="0 0 18 18" className="size-[18px]">
            <path d="M15 10.500H6.200c.2 3.800 5 4.200 6 1.500h2.600c-2 6-11.800 5.500-11.800-2.500 0-8 12-8.500 12 1z M6.300 8.300h5.600c-.2-3.300-5.400-3.300-5.600 0z" fill="#4cb4ec" stroke="#1e78b8" strokeWidth=".6" fillRule="evenodd" />
            <path d="M1.500 16c-2-3 4-10 9-13 4-2.500 7-2.500 6 1.500" fill="none" stroke="#f0c43c" strokeWidth="1.500" />
          </svg>
        </button>
        <button aria-label="File Explorer" className="flex h-[22px] w-8 items-center justify-center border-2 border-t-[#404040] border-r-white border-b-white border-l-[#404040] bg-[#f4f2ee]">
          <LibrariesIcon />
        </button>
        <button aria-label="Media Player" className="ml-[11px]">
          <svg viewBox="0 0 16 16" className="size-4"><rect x=".5" y=".5" width="15" height="15" fill="#a8d2f0" stroke="#5a94c4" /><rect x="2.500" y="2.500" width="11" height="11" fill="#e8f3fb" /><circle cx="8" cy="8" r="5.500" fill="#f28a1c" /><path d="M6.500 5l4 3-4 3z" fill="#fff" /></svg>
        </button>
        <button aria-label="Chrome" className="ml-[18px]"><ChromeIcon className="size-[15px]" /></button>
        <button aria-label="Opera" className="ml-[18px]"><OperaIcon className="size-4" /></button>
        <button aria-label="WinRAR" className={`ml-2.5 flex h-[22px] w-8 items-center justify-center ${raised}`}><RarMini /></button>
      </div>
      <div className="mt-0.5 ml-auto flex h-[22px] w-[172px] items-center border border-t-[#808080] border-r-white border-b-white border-l-[#808080] pr-px pl-1.5">
        <svg viewBox="0 0 7 9" className="mr-[9px] h-[9px] w-[7px] shrink-0" fill="none" stroke="#000" strokeWidth="1.300"><path d="M1 3.500L3.500 1 6 3.500M1 8l2.500-2.500L6 8" /></svg>
        <svg viewBox="0 0 17 16" className="mr-2 h-4 w-[17px] shrink-0"><path d="M1 5.500h3L8 2v12l-4-3.500H1z" fill="#fff" stroke="#707070" /><path d="M10.500 5.500q1.500 2.500 0 5M12.500 3.500q3 4.500 0 9M14.500 2q3.500 6 0 12" fill="none" stroke="#909090" /></svg>
        <svg viewBox="0 0 16 16" className="mr-[7px] size-4 shrink-0"><rect x="4.500" y="3.500" width="11" height="9" fill="#e8e8e8" stroke="#666" /><path d="M1 1v4h4V1M3 5v9h4" fill="none" stroke="#555" strokeWidth="1.300" /><path d="M10.500 6.500L16 15.500H5z" fill="#ffd91e" stroke="#b08a00" strokeWidth=".6" /><path d="M10.500 9.500v3M10.500 13.500v1" stroke="#000" strokeWidth="1.300" /></svg>
        <svg viewBox="0 0 16 16" className="size-4 shrink-0"><path d="M1.500 1v14M2 2.500c3-1.500 4 .5 7 0v1.500h5.500c-1 2-1 2 0 5-3 .5-4-.5-6 0V8H2z" fill="#fff" stroke="#707070" /></svg>
        <time className="ml-auto pr-[11px] whitespace-nowrap">4:27 PM</time>
        <DesktopIcon />
      </div>
    </footer>
  );
}

function Watermark() {
  return (
    <div className="absolute right-12 bottom-5 flex items-center gap-1.5 font-['Roboto_Condensed','Liberation_Sans_Narrow','Roboto',sans-serif] text-[39px] leading-none font-light text-white/50">
      <span>ANY</span>
      <svg viewBox="0 0 54 62" className="h-[62px] w-[54px]" fill="none" stroke="currentColor" strokeWidth="3" strokeLinejoin="round" strokeLinecap="round">
        <path d="M7 9L4 7Q2 7 2 9V44Q2 47 5 46L41 25" />
        <path d="M8 40V12" strokeWidth="2" />
        <path d="M12 36V5Q13 2 16 4L51 24Q53 26 51 28L47 26L17 11" />
        <path d="M12 51V57Q13 60 16 58L51 37Q53 35 51 32L12 53" />
      </svg>
      <span>RUN</span>
    </div>
  );
}

export default function App() {
  return (
    <div className="relative flex h-screen w-full flex-col overflow-hidden bg-[#0560c8] font-['DejaVu_Sans_Condensed','Noto_Sans',sans-serif] text-[11px] leading-[14px] text-black">
      <main className="relative min-h-0 flex-1">
        <Wallpaper />
        <DesktopIcons />
        <ArchiveWindow />
        <ExplorerWindow />
        <Watermark />
      </main>
      <Taskbar />
    </div>
  );
}
